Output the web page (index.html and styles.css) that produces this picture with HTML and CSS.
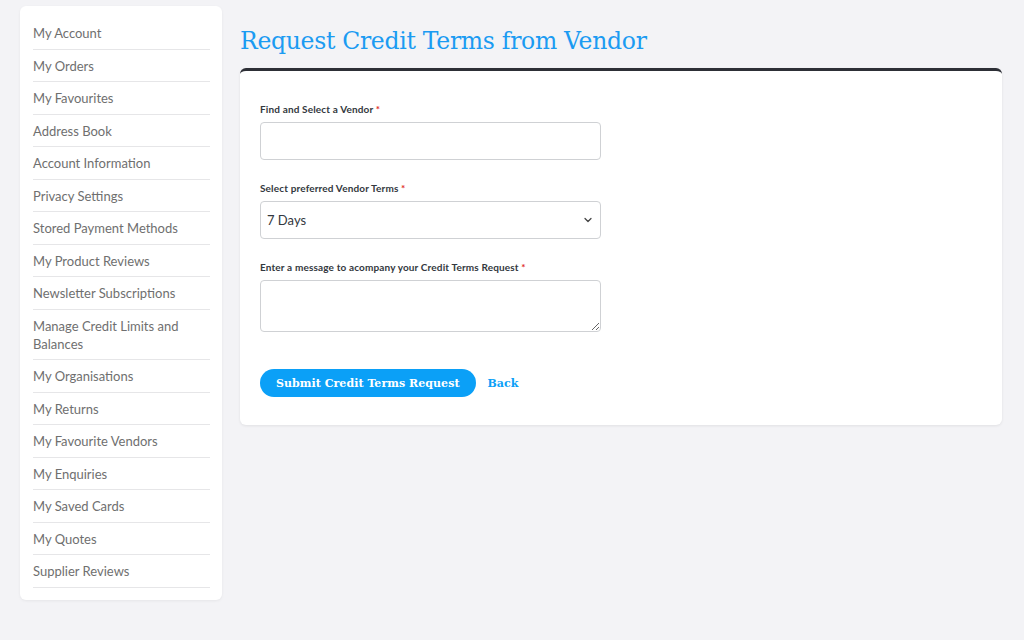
FILE: index.html
```html
<!DOCTYPE html>
<html lang="en">
<head>
  <meta charset="UTF-8">
  <title>Request Credit Terms from Vendor</title>
  <link rel="stylesheet" href="styles.css">
</head>
<body>
  <div class="page">
    <aside class="sidebar">
      <ul class="account-nav">
        <li><a href="#">My Account</a></li>
        <li><a href="#">My Orders</a></li>
        <li><a href="#">My Favourites</a></li>
        <li><a href="#">Address Book</a></li>
        <li><a href="#">Account Information</a></li>
        <li><a href="#">Privacy Settings</a></li>
        <li><a href="#">Stored Payment Methods</a></li>
        <li><a href="#">My Product Reviews</a></li>
        <li><a href="#">Newsletter Subscriptions</a></li>
        <li><a href="#">Manage Credit Limits and Balances</a></li>
        <li><a href="#">My Organisations</a></li>
        <li><a href="#">My Returns</a></li>
        <li><a href="#">My Favourite Vendors</a></li>
        <li><a href="#">My Enquiries</a></li>
        <li><a href="#">My Saved Cards</a></li>
        <li><a href="#">My Quotes</a></li>
        <li><a href="#">Supplier Reviews</a></li>
      </ul>
    </aside>

    <main class="main">
      <h1 class="page-title">Request Credit Terms from Vendor</h1>

      <form class="card">
        <div class="field">
          <label class="field-label" for="vendor">Find and Select a Vendor <span class="req">*</span></label>
          <input id="vendor" class="input" type="text">
        </div>

        <div class="field">
          <label class="field-label" for="terms">Select preferred Vendor Terms <span class="req">*</span></label>
          <div class="select-wrap">
            <select id="terms" class="input select">
              <option>7 Days</option>
              <option>14 Days</option>
              <option>30 Days</option>
            </select>
            <svg class="chevron" width="12" height="12" viewBox="0 0 24 24" fill="none" stroke="currentColor" stroke-width="2.5" stroke-linecap="round" stroke-linejoin="round">
              <polyline points="6 9 12 15 18 9"></polyline>
            </svg>
          </div>
        </div>

        <div class="field">
          <label class="field-label" for="message">Enter a message to acompany your Credit Terms Request <span class="req">*</span></label>
          <textarea id="message" class="input textarea"></textarea>
        </div>

        <div class="actions">
          <button type="button" class="submit-btn">Submit Credit Terms Request</button>
          <a href="#" class="back-link">Back</a>
        </div>
      </form>
    </main>
  </div>
</body>
</html>
```

FILE: styles.css
```css
:root {
  --blue: #1b9bf2;
  --btn-blue: #0ba0f7;
  --bg: #f3f3f6;
  --text: #333840;
  --muted: #6f6f6f;
  --line: #e6e6e8;
}

* {
  margin: 0;
  padding: 0;
  box-sizing: border-box;
}

body {
  font-family: 'Lato', 'Noto Sans', sans-serif;
  background-color: var(--bg);
  color: var(--text);
}

.page {
  display: flex;
  align-items: flex-start;
  gap: 18px;
  padding: 6px 22px 40px 20px;
}

.sidebar {
  width: 202px;
  flex-shrink: 0;
  background: white;
  border-radius: 6px;
  padding: 11px 12px 12px 13px;
  box-shadow: 0 1px 3px rgba(0,0,0,0.06);
}

.account-nav {
  list-style: none;
}

.account-nav li {
  border-bottom: 1px solid var(--line);
  padding: 7px 0 6.5px;
}

.account-nav a {
  display: block;
  color: var(--muted);
  text-decoration: none;
  font-size: 13px;
  line-height: 18px;
}

.main {
  flex: 1;
  min-width: 0;
}

.page-title {
  font-family: 'DejaVu Serif', 'Liberation Serif', serif;
  font-weight: normal;
  color: var(--blue);
  font-size: 23.5px;
  line-height: 30px;
  letter-spacing: -0.3px;
  margin: 20px 0 12px;
}

.card {
  background: white;
  border-top: 3px solid #2d2f36;
  border-radius: 6px;
  padding: 32px 20px 28px;
  box-shadow: 0 1px 3px rgba(0,0,0,0.08);
}

.field {
  margin-bottom: 22px;
}

.field-label {
  display: block;
  font-size: 10px;
  font-weight: bold;
  letter-spacing: 0.15px;
  color: var(--text);
  margin-bottom: 7px;
}

.req {
  color: #e02b27;
}

.input {
  display: block;
  width: 341px;
  height: 38px;
  border: 1px solid #cfd1d4;
  border-radius: 4px;
  background: white;
  font-family: 'Lato', 'Noto Sans', sans-serif;
  font-size: 13px;
  color: var(--text);
  padding: 0 6px;
}

.select-wrap {
  position: relative;
  width: 341px;
}

.select {
  appearance: none;
  -webkit-appearance: none;
}

.chevron {
  position: absolute;
  right: 7px;
  top: 13px;
  color: #444;
  pointer-events: none;
}

.textarea {
  height: 52px;
  resize: vertical;
  padding: 6px;
}

.actions {
  display: flex;
  align-items: center;
  gap: 12px;
  margin-top: 37px;
}

.submit-btn {
  height: 28px;
  padding: 0 16px;
  border: none;
  border-radius: 14px;
  background: var(--btn-blue);
  color: white;
  font-family: 'DejaVu Serif', 'Liberation Serif', serif;
  font-weight: bold;
  font-size: 11px;
  letter-spacing: 0.05px;
  cursor: pointer;
}

.back-link {
  color: var(--btn-blue);
  text-decoration: none;
  font-family: 'DejaVu Serif', 'Liberation Serif', serif;
  font-weight: bold;
  font-size: 11px;
}
```
